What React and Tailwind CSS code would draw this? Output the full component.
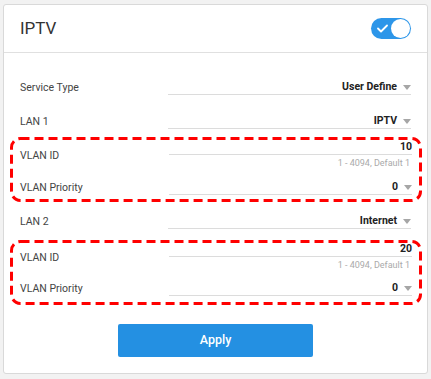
import React from 'react'

const Arrow = () => (
  <svg width="8" height="5" viewBox="0 0 8 5" className="ml-[6px] shrink-0">
    <path d="M0 0 L8 0 L4 5 Z" fill="#a6a6a6" />
  </svg>
)

const Label = ({ children }) => (
  <div className="flex-1 text-[10.5px] leading-[14px] text-[#444]">{children}</div>
)

const Field = ({ value, arrow = true }) => (
  <div className="flex h-[14px] w-[243px] items-center justify-end border-b border-[#dcdcdc] pb-[1px]">
    <span className="text-[10.5px] font-bold leading-none text-[#222]">{value}</span>
    {arrow && <Arrow />}
  </div>
)

const SelectRow = ({ label, value }) => (
  <div className="flex h-[34px] items-center">
    <Label>{label}</Label>
    <Field value={value} />
  </div>
)

// red dashed highlight drawn over the group
const VlanBox = ({ id, h, pt, gap }) => (
  <div className={`relative -mx-[10px] w-[412px] px-[10px] ${h} ${pt}`}>
    <svg className="pointer-events-none absolute inset-0" width="412" height="100%">
      <rect x="1.5" y="1.5" width="409" height="calc(100% - 3px)" rx="9" fill="none" stroke="#ff0000" strokeWidth="3" strokeDasharray="9 5" />
    </svg>
    <div className="flex items-center">
      <Label>VLAN ID</Label>
      <div className="w-[243px]">
        <div className="flex h-[14px] items-center justify-end border-b border-[#dcdcdc] pb-[1px]">
          <span className="text-[10.5px] font-bold leading-none text-[#222]">{id}</span>
        </div>
        <div className="mt-[2px] flex h-[14px] items-center justify-end pr-[2px] text-[9px] text-[#aaa]">
          1 - 4094, Default 1
        </div>
      </div>
    </div>
    <div className={`flex items-center ${gap}`}>
      <Label>VLAN Priority</Label>
      <Field value="0" />
    </div>
  </div>
)

export default function App() {
  return (
    <div className="min-h-[379px] bg-[#f2f2f2] px-[3px] pt-[4px] pb-[5px] font-['Roboto',sans-serif]">
      <div className="w-[425px] rounded-[3px] border border-[#d9d9d9] bg-white">
        {/* Header */}
        <div className="flex h-[48px] items-center justify-between border-b border-[#e0e0e0] px-[16px]">
          <h1 className="text-[17px] text-[#333]">IPTV</h1>
          <div className="flex h-[21px] w-[40px] items-center justify-between rounded-full bg-[#2d96e9] pl-[6px] pr-[1px]">
            <svg width="11" height="9" viewBox="0 0 11 9">
              <path d="M1 4.5 L4 7.5 L10 1.5" fill="none" stroke="white" strokeWidth="1.8" strokeLinecap="round" strokeLinejoin="round" />
            </svg>
            <div className="h-[19px] w-[19px] rounded-full bg-white" />
          </div>
        </div>

        {/* Body */}
        <div className="px-[16px] pt-[18px] pb-[16px]">
          <SelectRow label="Service Type" value="User Define" />
          <SelectRow label="LAN 1" value="IPTV" />
          <div className="-mt-[2px]">
            <VlanBox id="10" h="h-[65px]" pt="pt-[4px]" gap="mt-[10px]" />
          </div>
          <div className="mt-[3px]">
            <SelectRow label="LAN 2" value="Internet" />
          </div>
          <div className="mt-[1px]">
            <VlanBox id="20" h="h-[65px]" pt="pt-[3px]" gap="mt-[9px]" />
          </div>
          <div className="mt-[19px] flex justify-center">
            <button className="h-[33px] w-[195px] rounded-[2px] bg-[#2490e2] text-[12.5px] font-medium text-white">
              Apply
            </button>
          </div>
        </div>
      </div>
    </div>
  )
}
